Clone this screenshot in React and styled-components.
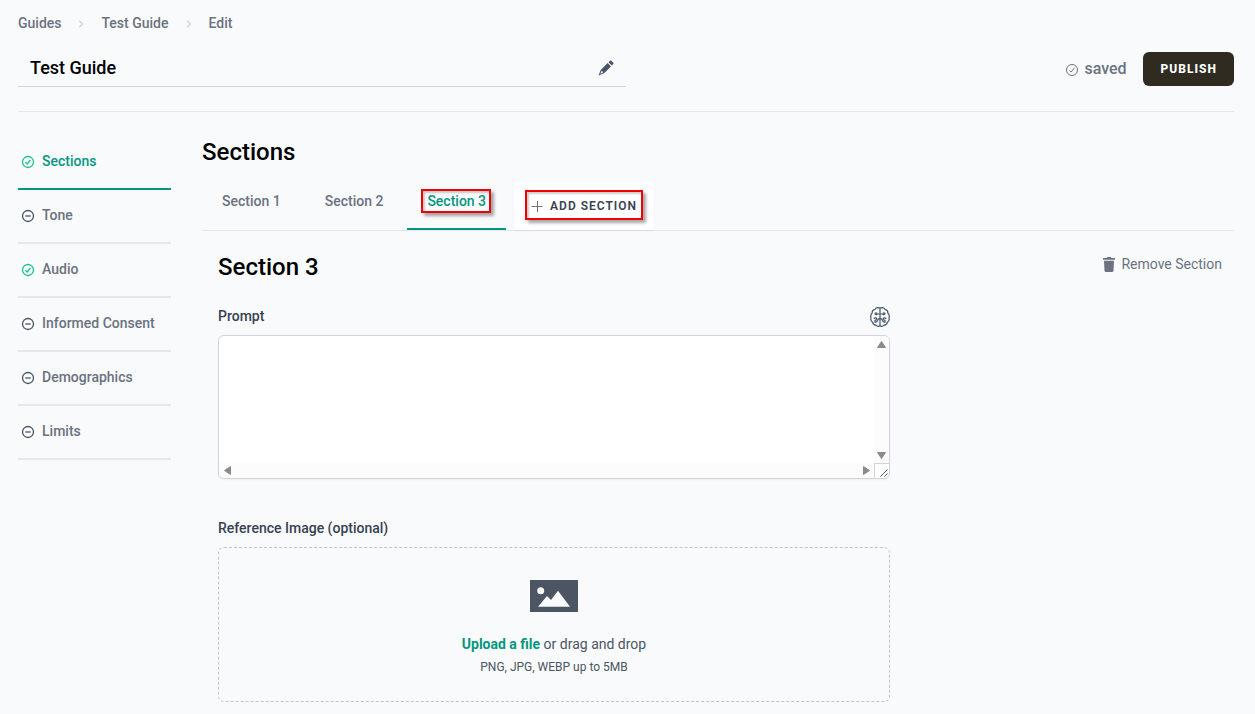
import React from "react";
import styled, { createGlobalStyle } from "styled-components";
import { BsChevronRight } from "react-icons/bs";

const steps = [
  { name: "Sections", done: true, current: true },
  { name: "Tone" },
  { name: "Audio", done: true },
  { name: "Informed Consent" },
  { name: "Demographics" },
  { name: "Limits" },
];

const tabs = ["Section 1", "Section 2", "Section 3"];

const StatusIcon = ({ done, thin }) => (
  <svg
    width="14"
    height="14"
    viewBox="0 0 14 14"
    fill="none"
    stroke="currentColor"
    strokeWidth={thin ? 1 : 1.3}
    aria-hidden="true"
  >
    <circle cx="7" cy="7" r="5.500" />
    {done ? <path d="M4.500 7.300 6.200 9l3.300-4.200" /> : <path d="M4.300 7h5.400" />}
  </svg>
);

const PencilIcon = () => (
  <svg width="16" height="16" viewBox="0 0 16 16" fill="currentColor" aria-hidden="true">
    <path d="M12 .8c.4-.4.9-.4 1.300 0l2 2c.4.4.4.9 0 1.300L13.800 5.600 10.500 2.300z" />
    <path
      fillRule="evenodd"
      d="M9.700 3.100 13 6.400 6 13.300.500 15.500 2.700 10zM3.300 11.200 2.400 13.700 4.800 12.700 4.700 11.300z"
    />
  </svg>
);

const PlusIcon = () => (
  <svg width="14" height="14" viewBox="0 0 14 14" fill="none" stroke="currentColor" aria-hidden="true">
    <path d="M1.500 7.500h11M7.500 2v11" />
  </svg>
);

const TrashIcon = () => (
  <svg width="12" height="15" viewBox="0 0 12 15" fill="currentColor" aria-hidden="true">
    <path d="M0 1h3.6L4.400 0h3.200l.8 1H12v1.700H0z" />
    <path d="M1 3.700h10l-.5 9.900c0 .8-.5 1.400-1.300 1.400H2.800c-.8 0-1.300-.6-1.300-1.400z" />
  </svg>
);

const BrainIcon = () => (
  <svg
    width="20"
    height="20"
    viewBox="0 0 20 20"
    fill="none"
    stroke="currentColor"
    strokeWidth="1.200"
    strokeLinecap="round"
    aria-hidden="true"
  >
    <path d="M10 1.200C8 .2 6 .6 5 2.300 3 2.600 2 4 2.200 6 .8 7.300.4 9 .9 10.800c-.4 2 .2 3.500 1.700 4.400.3 1.800 1.500 2.900 3.300 3 1.200 1.200 2.800 1.400 4.100.6 1.300.8 2.900.6 4.100-.6 1.800-.1 3-1.200 3.300-3 1.500-.9 2.100-2.400 1.700-4.400.5-1.800.1-3.500-1.300-4.800.2-2-.8-3.400-2.800-3.700-1-1.700-3-2.100-5-1.100z" />
    <path d="M10 1.500v17M7 7h6" />
    <circle cx="6" cy="6.700" r=".9" />
    <circle cx="14" cy="6.700" r=".9" />
    <path d="M4.200 11.500c.9-1 2.700-.8 2.700.5 0 1.200-2.400.9-2.200 2.400.2 1 1.700.9 2.300 0 .7-1 1-2.700 3-3M15.800 11.500c-.9-1-2.700-.8-2.700.5 0 1.200 2.400.9 2.200 2.400-.2 1-1.700.9-2.300 0-.7-1-1-2.700-3-3" />
  </svg>
);

const ImageIcon = () => (
  <svg width="48" height="32" viewBox="0 0 48 32" aria-hidden="true">
    <path d="M0 0h48v32H0z" fill="#4b5563" />
    <circle cx="10.700" cy="10.700" r="3.500" fill="#f9fafc" />
    <path d="M8 26.700 17 16l4 4 7-9.300 12 16z" fill="#f9fafc" />
  </svg>
);

const arrows = {
  up: "M3.500 11.500h8l-4-6z",
  down: "M3.500 4.500h8l-4 6z",
  left: "M11.500 3.500v8l-6-4z",
  right: "M4.500 3.500v8l6-4z",
};

const Arrow = ({ to }) => (
  <svg
    width="15"
    height="15"
    viewBox="0 0 15 15"
    fill="#8b8b8b"
    stroke="#8b8b8b"
    strokeLinejoin="round"
  >
    <path d={arrows[to]} />
  </svg>
);

const App = () => {
  return (
    <Page>
      <GlobalStyle />
      <Breadcrumb aria-label="Breadcrumb">
        <a href="#guides">Guides</a>
        <BsChevronRight />
        <a href="#guide">Test Guide</a>
        <BsChevronRight />
        <a href="#edit">Edit</a>
      </Breadcrumb>
      <Header>
        <TitleField>
          <input aria-label="Guide title" defaultValue="Test Guide" />
          <PencilIcon />
        </TitleField>
        <Actions>
          <Saved>
            <StatusIcon done thin />
            saved
          </Saved>
          <PublishButton type="button">PUBLISH</PublishButton>
        </Actions>
      </Header>
      <Body>
        <SideNav aria-label="Guide steps">
          {steps.map(({ name, done, current }) => (
            <Step key={name} href="#step" $done={done} $current={current}>
              <StatusIcon done={done} />
              {name}
            </Step>
          ))}
        </SideNav>
        <Main>
          <Heading>Sections</Heading>
          <TabBar>
            {tabs.map((tab) => (
              <Tab key={tab} type="button" $current={tab === "Section 3"}>
                {tab === "Section 3" ? <Marked>{tab}</Marked> : tab}
              </Tab>
            ))}
            <AddButton type="button">
              <Marked>
                <PlusIcon />
                ADD SECTION
              </Marked>
            </AddButton>
          </TabBar>
          <Panel>
            <PanelHeader>
              <Heading>Section 3</Heading>
              <RemoveButton type="button">
                <TrashIcon />
                Remove Section
              </RemoveButton>
            </PanelHeader>
            <Form>
              <LabelRow>
                <label htmlFor="prompt">Prompt</label>
                <IconButton type="button" aria-label="Generate prompt">
                  <BrainIcon />
                </IconButton>
              </LabelRow>
              <PromptBox>
                <textarea id="prompt" />
                <ScrollTrack $vertical aria-hidden="true">
                  <Arrow to="up" />
                  <Arrow to="down" />
                </ScrollTrack>
                <ScrollTrack aria-hidden="true">
                  <Arrow to="left" />
                  <Arrow to="right" />
                </ScrollTrack>
                <Grip>
                  <svg width="14" height="14" viewBox="0 0 14 14" stroke="#555" aria-hidden="true">
                    <path d="M5.500 12.500l7-7M9.500 12.500l3-3" />
                  </svg>
                </Grip>
              </PromptBox>
              <UploadLabel htmlFor="file">Reference Image (optional)</UploadLabel>
              <DropZone>
                <ImageIcon />
                <p>
                  <label htmlFor="file">Upload a file</label> or drag and drop
                </p>
                <small>PNG, JPG, WEBP up to 5MB</small>
                <FileInput id="file" type="file" />
              </DropZone>
            </Form>
          </Panel>
        </Main>
      </Body>
    </Page>
  );
};

const GlobalStyle = createGlobalStyle`
  *,
  *::before,
  *::after {
    box-sizing: border-box;
  }
  body {
    margin: 0;
    background: #f9fafc;
    color: #000;
    font-family: Roboto, sans-serif;
    font-size: 14px;
    line-height: 20px;
  }
  h2,
  p {
    margin: 0;
  }
  a {
    color: inherit;
    text-decoration: none;
  }
  button {
    border: none;
    padding: 0;
    background: none;
    color: inherit;
    font: inherit;
    cursor: pointer;
  }
  svg {
    flex-shrink: 0;
  }
`;

const Page = styled.div`
  padding: 13px 21px 12px 18px;
`;

const Breadcrumb = styled.nav`
  display: flex;
  align-items: center;
  gap: 16px;
  color: #6b7280;
  font-weight: 500;

  svg {
    width: 8px;
    height: 8px;
    margin-top: 2px;
    color: #9ca3af;
  }
`;

const Header = styled.header`
  display: flex;
  justify-content: space-between;
  align-items: center;
  padding: 16px 0 24px;
  border-bottom: 1px solid #e5e7eb;
`;

const TitleField = styled.div`
  display: flex;
  align-items: center;
  flex: 0 1 50%;
  height: 38px;
  padding: 0 12px;
  border-bottom: 1px solid #d1d5db;
  color: #475569;

  input {
    flex: 1;
    min-width: 0;
    padding: 0;
    border: none;
    outline: none;
    background: transparent;
    color: #000;
    font: 500 18px/28px Roboto, sans-serif;
  }
`;

const Actions = styled.div`
  display: flex;
  align-items: center;
  gap: 16px;
  padding-top: 2px;
`;

const Saved = styled.span`
  display: flex;
  align-items: center;
  gap: 5px;
  color: #6b7280;
  font-size: 16px;
  font-weight: 500;

  svg {
    margin-top: 2px;
  }
`;

const PublishButton = styled.button`
  height: 34px;
  padding: 0 17px 0 18px;
  border-radius: 6px;
  background: #2f2b20;
  color: #fff;
  font-size: 12px;
  font-weight: 800;
  letter-spacing: 1px;
`;

const Body = styled.div`
  display: flex;
  gap: 31px;
  padding-top: 24px;
`;

const SideNav = styled.nav`
  flex: 0 0 153px;
`;

const Step = styled.a`
  display: flex;
  align-items: center;
  gap: 7px;
  height: 54px;
  padding: 0 3px 2px;
  border-bottom: 2px solid ${({ $current }) => ($current ? "#059680" : "#e5e7eb")};
  color: ${({ $current }) => ($current ? "#059680" : "#6b7280")};
  font-weight: 500;

  svg {
    margin-top: 2px;
    color: ${({ $done }) => ($done ? "#1fc08a" : "#4b5563")};
  }
`;

const Main = styled.main`
  flex: 1;
  min-width: 0;
`;

const Heading = styled.h2`
  font-size: 24px;
  font-weight: 500;
  line-height: 32px;
`;

const TabBar = styled.div`
  display: flex;
  align-items: flex-end;
  gap: 4px;
  padding-top: 14px;
  border-bottom: 1px solid #e5e7eb;
`;

const Tab = styled.button`
  height: 48px;
  padding: 0 20px 8px;
  border-bottom: 2px solid ${({ $current }) => ($current ? "#059680" : "transparent")};
  color: ${({ $current }) => ($current ? "#059680" : "#6b7280")};
  font-weight: 500;
`;

const Marked = styled.span`
  position: relative;
  display: inline-flex;
  align-items: center;
  gap: 6px;

  &::after {
    content: "";
    position: absolute;
    inset: -2px -5px -2px -6px;
    border: 2px solid #f00000;
    box-shadow: 3px 3px 3px rgba(0, 0, 0, 0.35), inset 2px 2px 2px rgba(0, 0, 0, 0.2);
  }
`;

const AddButton = styled.button`
  height: 48px;
  margin-left: 4px;
  padding: 2px 17px 0 16px;
  border-radius: 6px 6px 0 0;
  background: #fff;
  box-shadow: 0 1px 2px rgba(0, 0, 0, 0.05);
  color: #374151;
  font-size: 12px;
  font-weight: 600;
  letter-spacing: 1px;

  ${Marked}::after {
    inset: -6px -6px -4px -5px;
  }
  svg {
    color: #6b7280;
  }
`;

const Panel = styled.section`
  padding: 20px 12px 0 16px;
`;

const PanelHeader = styled.div`
  display: flex;
  justify-content: space-between;
  align-items: flex-start;
`;

const RemoveButton = styled.button`
  display: flex;
  align-items: center;
  gap: 6px;
  height: 26px;
  color: #6b7280;
`;

const Form = styled.form`
  display: flex;
  flex-direction: column;
  max-width: 672px;
  padding-top: 22px;
`;

const LabelRow = styled.div`
  display: flex;
  justify-content: space-between;
  align-items: center;
  height: 22px;
  margin-bottom: 8px;
  color: #374151;
  font-weight: 500;
`;

const IconButton = styled.button`
  display: flex;
  padding-top: 2px;
  color: #475569;
`;

const PromptBox = styled.div`
  display: grid;
  grid-template-columns: 1fr 15px;
  grid-template-rows: 1fr 15px;
  height: 144px;
  overflow: hidden;
  border: 1px solid #d1d5db;
  border-radius: 6px;
  background: #fff;
  box-shadow: 0 1px 2px rgba(0, 0, 0, 0.05);

  textarea {
    padding: 8px 12px;
    border: none;
    outline: none;
    resize: none;
    background: transparent;
    font: inherit;
  }
`;

const ScrollTrack = styled.div`
  display: flex;
  flex-direction: ${({ $vertical }) => ($vertical ? "column" : "row")};
  justify-content: space-between;
  background: #fcfcfc;
`;

const Grip = styled.span`
  display: flex;
  border: solid #d1d5db;
  border-width: 1px 0 0 1px;
`;

const UploadLabel = styled.label`
  margin: 39px 0 9px;
  color: #374151;
  font-weight: 500;
`;

const DropZone = styled.div`
  display: flex;
  flex-direction: column;
  align-items: center;
  padding: 32px 24px 24px;
  border: 1px dashed #c0c4cb;
  border-radius: 6px;
  color: #4b5563;

  p {
    margin: 22px 0 3px;
  }
  label {
    color: #059680;
    font-weight: 700;
    cursor: pointer;
  }
  small {
    font-size: 12px;
  }
`;

const FileInput = styled.input`
  display: none;
`;

export default App;
